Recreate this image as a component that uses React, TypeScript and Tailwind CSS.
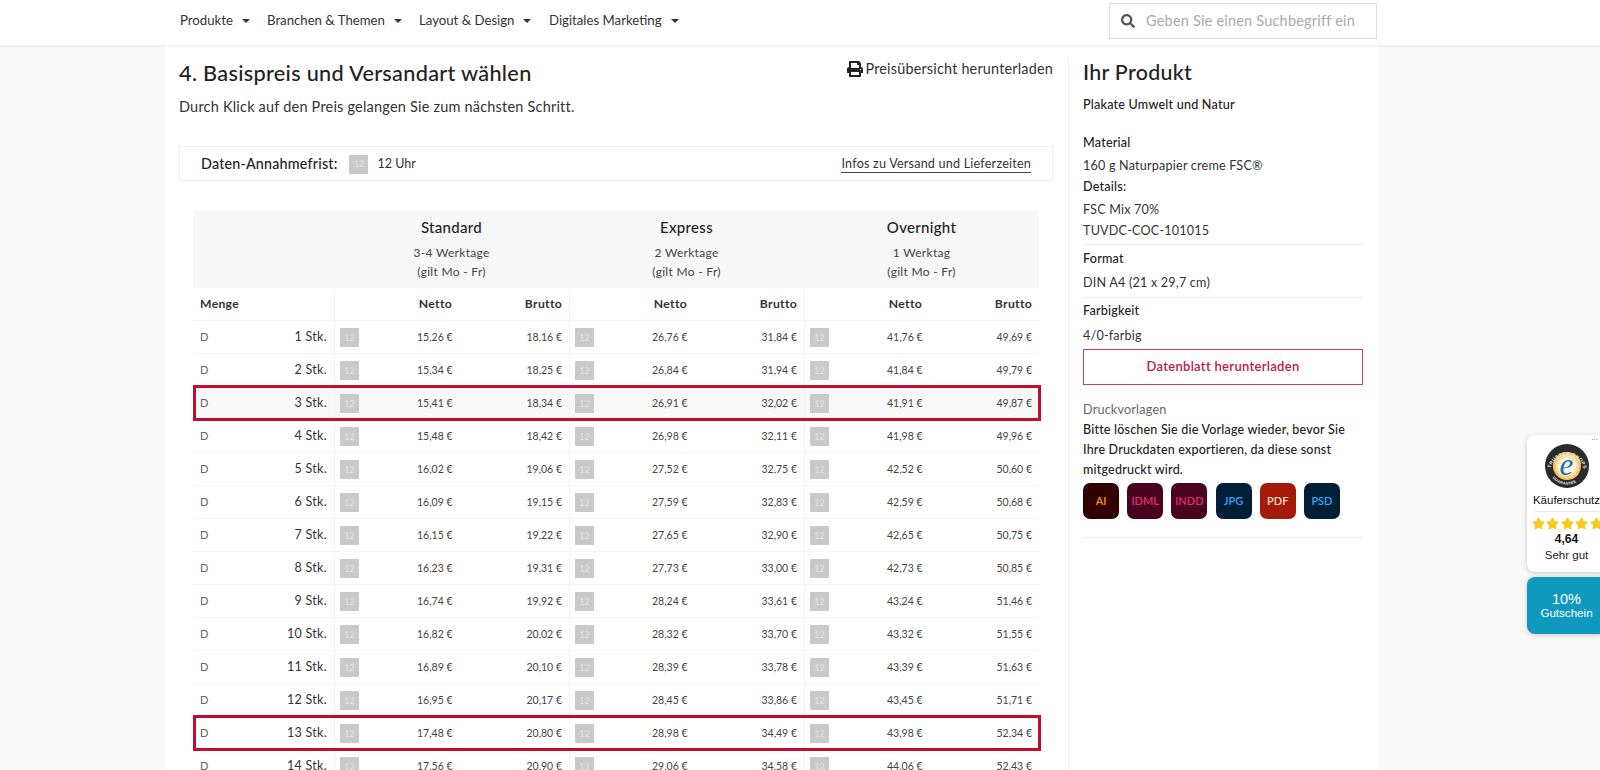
import { FaPrint, FaSearch, FaStar } from "react-icons/fa";

const rows = [
  ["1", "15,26", "18,16", "26,76", "31,84", "41,76", "49,69"],
  ["2", "15,34", "18,25", "26,84", "31,94", "41,84", "49,79"],
  ["3", "15,41", "18,34", "26,91", "32,02", "41,91", "49,87"],
  ["4", "15,48", "18,42", "26,98", "32,11", "41,98", "49,96"],
  ["5", "16,02", "19,06", "27,52", "32,75", "42,52", "50,60"],
  ["6", "16,09", "19,15", "27,59", "32,83", "42,59", "50,68"],
  ["7", "16,15", "19,22", "27,65", "32,90", "42,65", "50,75"],
  ["8", "16,23", "19,31", "27,73", "33,00", "42,73", "50,85"],
  ["9", "16,74", "19,92", "28,24", "33,61", "43,24", "51,46"],
  ["10", "16,82", "20,02", "28,32", "33,70", "43,32", "51,55"],
  ["11", "16,89", "20,10", "28,39", "33,78", "43,39", "51,63"],
  ["12", "16,95", "20,17", "28,45", "33,86", "43,45", "51,71"],
  ["13", "17,48", "20,80", "28,98", "34,49", "43,98", "52,34"],
  ["14", "17,56", "20,90", "29,06", "34,58", "44,06", "52,43"],
];

const shipping = [
  { name: "Standard", days: "3-4 Werktage" },
  { name: "Express", days: "2 Werktage" },
  { name: "Overnight", days: "1 Werktag" },
];

const templates = [
  { label: "AI", box: "bg-[#330000]", text: "text-[#ff9a00]" },
  { label: "IDML", box: "bg-[#49021f]", text: "text-[#e0306f]" },
  { label: "INDD", box: "bg-[#49021f]", text: "text-[#e0306f]" },
  { label: "JPG", box: "bg-[#001e36]", text: "text-[#31a8ff]" },
  { label: "PDF", box: "bg-[#a51b0b]", text: "text-[#ffd9d0]" },
  { label: "PSD", box: "bg-[#001e36]", text: "text-[#31a8ff]" },
];

function Badge() {
  return (
    <span className="flex h-[19px] w-[19px] shrink-0 items-center justify-center bg-[#c9c9c9] text-[9px] text-[#e4e4e4]">
      12
    </span>
  );
}

function NavItem({ label, width }: { label: string; width: string }) {
  return (
    <div className={`flex items-center text-[13.2px] text-[#333] ${width}`}>
      <span>{label}</span>
      <span className="ml-[9px] h-0 w-0 border-x-[4px] border-t-[4px] border-x-transparent border-t-[#333]"></span>
    </div>
  );
}

function PriceGroup({ values }: { values: string[] }) {
  return (
    <div className="flex items-center border-l border-[#f3f3f3] pl-[5px] pr-[7px]">
      <Badge />
      <span className="w-[94px] text-right">{values[0]} €</span>
      <span className="w-[110px] text-right">{values[1]} €</span>
    </div>
  );
}

function PriceRow({ row }: { row: string[] }) {
  const marked = row[0] === "3" || row[0] === "13";
  return (
    <div
      className={`relative grid h-[33px] shrink-0 grid-cols-[141px_235px_235px_235px] border-b border-[#f5f5f5] pt-[1px] text-[10.5px] text-[#444] ${
        row[0] === "3" ? "bg-[#f8f8f9]" : ""
      }`}
    >
      <div className="flex items-center justify-between pl-[7px] pr-[7px]">
        <span className="text-[11px] text-[#666]">D</span>
        <span className="text-[12.5px] tracking-[0.3px] text-[#333]">{row[0]} Stk.</span>
      </div>
      <PriceGroup values={[row[1], row[2]]} />
      <PriceGroup values={[row[3], row[4]]} />
      <PriceGroup values={[row[5], row[6]]} />
      {marked && (
        <div className="absolute left-0 top-[-2px] h-[36px] w-[848px] border-[3px] border-[#c10e2e]"></div>
      )}
    </div>
  );
}

function PriceTable() {
  return (
    <div className="ml-[14px] mt-[29px] flex w-[846px] flex-col">
      <div className="grid h-[78px] shrink-0 grid-cols-[141px_235px_235px_235px] bg-[#f7f7f8] text-center">
        <div></div>
        {shipping.map((s) => (
          <div key={s.name} className="pt-[7px]">
            <div className="text-[15px] font-medium leading-[20px] tracking-[0.3px] text-[#222]">{s.name}</div>
            <div className="mt-[6px] text-[12px] leading-[19px] tracking-[0.3px] text-[#444]">
              <div>{s.days}</div>
              <div>(gilt Mo - Fr)</div>
            </div>
          </div>
        ))}
      </div>
      <div className="grid h-[33px] shrink-0 grid-cols-[141px_235px_235px_235px] border-b border-[#f5f5f5] pt-[1px] text-[12.2px] font-bold tracking-[0.3px] text-[#333]">
        <div className="flex items-center pl-[7px]">Menge</div>
        {shipping.map((s) => (
          <div key={s.name} className="flex items-center border-l border-[#f3f3f3] pr-[7px]">
            <span className="w-[117px] text-right">Netto</span>
            <span className="w-[110px] text-right">Brutto</span>
          </div>
        ))}
      </div>
      {rows.map((row) => (
        <PriceRow key={row[0]} row={row} />
      ))}
    </div>
  );
}

function TrustedLogo() {
  return (
    <svg viewBox="0 0 44 44" className="h-[44px] w-[44px]">
      <defs>
        <path id="sealTop" d="M5.5 25 A16.8 16.8 0 0 1 38.5 25" />
        <path id="sealBottom" d="M3.5 26 A19 19 0 0 0 40.5 26" />
        <radialGradient id="sealGold" cx="0.5" cy="0.5" r="0.5">
          <stop offset="0.55" stopColor="#fff6dc" />
          <stop offset="1" stopColor="#f0bb4a" />
        </radialGradient>
      </defs>
      <circle cx="22" cy="22" r="22" fill="#2a2a2a" />
      <circle cx="22" cy="22" r="14" fill="url(#sealGold)" />
      <text fontSize="4.8" fontWeight="700" fill="#eeeeee" fontFamily="Liberation Sans, sans-serif" letterSpacing="0.35">
        <textPath href="#sealTop" startOffset="2%">TRUSTED SHOPS</textPath>
      </text>
      <text fontSize="3.8" fontWeight="700" fill="#eeeeee" fontFamily="Liberation Sans, sans-serif" letterSpacing="0.3">
        <textPath href="#sealBottom" startOffset="17%">GUARANTEE</textPath>
      </text>
      <text x="21.5" y="31" textAnchor="middle" fontSize="31" fontStyle="italic" fill="#1672b8" fontFamily="Liberation Serif, serif">
        e
      </text>
    </svg>
  );
}

function SideWidgets() {
  return (
    <div className="absolute left-[1527px] top-[435px] flex w-[80px] flex-col gap-[5px] font-['Liberation_Sans',sans-serif]">
      <div className="relative flex h-[137px] flex-col items-center rounded-[8px] bg-white pr-[1px] pt-[9px] shadow-[0_1px_5px_rgba(0,0,0,0.2)]">
        <span className="absolute right-[9px] top-[-1px] text-[8px] leading-[8px] text-[#555]">...</span>
        <TrustedLogo />
        <div className="mt-[5px] text-[11.5px] leading-[14px] text-[#111]">Käuferschutz</div>
        <div className="mt-[4px] w-[64px] border-t border-[#e8e8e8]"></div>
        <div className="ml-[2px] mt-[4px] flex h-[14px] w-[72px] shrink-0 items-center gap-[1.5px] text-[13px] text-[#f9c91e]">
          <FaStar className="shrink-0" />
          <FaStar className="shrink-0" />
          <FaStar className="shrink-0" />
          <FaStar className="shrink-0" />
          <FaStar className="shrink-0" />
        </div>
        <div className="mt-[1px] text-[12px] font-bold leading-[16px] text-[#111]">4,64</div>
        <div className="text-[11.5px] leading-[16px] text-[#222]">Sehr gut</div>
      </div>
      <div className="flex h-[57px] flex-col items-center justify-center rounded-[8px] bg-[#0f99bf] pr-[1px] text-white shadow-[0_1px_5px_rgba(0,0,0,0.2)]">
        <div className="text-[14.5px] leading-[14px]">10%</div>
        <div className="text-[11.6px] leading-[14px]">Gutschein</div>
      </div>
    </div>
  );
}

function Sidebar() {
  const line = "h-[20px] text-[12.6px] leading-[20px] tracking-[0.2px]";
  return (
    <aside className="mt-[14px] h-[711px] w-[310px] shrink-0 border-l border-[#eeeeee] pl-[14px]">
      <h2 className="h-[28px] text-[21.4px] font-medium leading-[26px] tracking-[0.3px] text-[#222]">Ihr Produkt</h2>
      <div className={`mt-[8px] font-medium text-[#222] ${line}`}>Plakate Umwelt und Natur</div>
      <div className="w-[280px]">
        <div className={`mt-[18px] font-medium text-[#222] ${line}`}>Material</div>
        <div className={`mt-[3px] text-[#333] ${line}`}>160 g Naturpapier creme FSC®</div>
        <div className={`mt-[1px] font-medium text-[#222] ${line}`}>Details:</div>
        <div className={`mt-[3px] text-[#333] ${line}`}>FSC Mix 70%</div>
        <div className={`mt-[1px] text-[#333] ${line}`}>TUVDC-COC-101015</div>
        <div className="mt-[3px] border-t border-[#eeeeee]"></div>
        <div className={`mt-[4px] font-medium text-[#222] ${line}`}>Format</div>
        <div className={`mt-[4px] text-[#333] ${line}`}>DIN A4 (21 x 29,7 cm)</div>
        <div className="mt-[4px] border-t border-[#eeeeee]"></div>
        <div className={`mt-[3px] font-medium text-[#222] ${line}`}>Farbigkeit</div>
        <div className={`mt-[5px] text-[#333] ${line}`}>4/0-farbig</div>
        <button className="mt-[3px] flex h-[36px] w-full items-center justify-center border-[1.5px] border-[#c4405c] text-[13px] font-semibold tracking-[0.3px] text-[#c2183f]">
          Datenblatt herunterladen
        </button>
        <div className={`mt-[15px] text-[#666] ${line}`}>Druckvorlagen</div>
        <div className="text-[12.5px] font-medium leading-[20px] tracking-[0.2px] text-[#222]">
          Bitte löschen Sie die Vorlage wieder, bevor Sie Ihre Druckdaten exportieren, da diese sonst mitgedruckt wird.
        </div>
        <div className="mt-[3px] flex gap-[8.2px]">
          {templates.map((t) => (
            <div
              key={t.label}
              className={`flex h-[36px] w-[36px] items-center justify-center rounded-[7px] text-[11px] font-semibold ${t.box} ${t.text}`}
            >
              {t.label}
            </div>
          ))}
        </div>
        <div className="mt-[18px] border-t border-[#eeeeee]"></div>
      </div>
    </aside>
  );
}

export default function App() {
  return (
    <div className="relative h-[770px] w-[1600px] overflow-hidden bg-[#f9f9f9] font-['Lato',sans-serif]">
      <header className="relative z-10 flex h-[45px] items-center bg-white pb-[3px] pl-[180px] pr-[223px] shadow-[0_1px_3px_rgba(0,0,0,0.08)]">
        <NavItem label="Produkte" width="w-[87px]" />
        <NavItem label="Branchen & Themen" width="w-[152px]" />
        <NavItem label="Layout & Design" width="w-[130px]" />
        <NavItem label="Digitales Marketing" width="w-[150px]" />
        <div className="ml-auto flex h-[36px] w-[268px] items-center border border-[#dddddd] pl-[11px]">
          <FaSearch className="text-[14px] text-[#555]" />
          <span className="ml-[11px] text-[14.5px] tracking-[0.2px] text-[#aaaaaa]">Geben Sie einen Suchbegriff ein</span>
        </div>
      </header>
      <main className="ml-[165px] flex h-[725px] w-[1213px] bg-white">
        <div className="w-[903px] shrink-0 pl-[14px]">
          <div className="mt-[14px] flex h-[28px] justify-between">
            <h1 className="text-[21.7px] font-medium leading-[28px] tracking-[0.3px] text-[#222]">
              4. Basispreis und Versandart wählen
            </h1>
            <div className="mr-[15px] flex h-[20px] items-center gap-[2px] text-[14.4px] tracking-[0.2px] text-[#333]">
              <FaPrint className="text-[16px] text-[#222]" />
              <span>Preisübersicht herunterladen</span>
            </div>
          </div>
          <p className="mt-[10px] h-[20px] text-[14.5px] leading-[20px] tracking-[0.2px] text-[#333]">
            Durch Klick auf den Preis gelangen Sie zum nächsten Schritt.
          </p>
          <div className="mt-[29px] flex h-[35px] w-[874px] items-center border border-[#eeeeee] pl-[21px] pr-[21px] pt-[1px]">
            <span className="text-[14.3px] font-medium tracking-[0.2px] text-[#222]">Daten-Annahmefrist:</span>
            <span className="ml-[12px]">
              <Badge />
            </span>
            <span className="ml-[9px] text-[12.5px] text-[#333]">12 Uhr</span>
            <span className="ml-auto border-b border-[#444] text-[12.6px] leading-[16px] tracking-[0.2px] text-[#333]">
              Infos zu Versand und Lieferzeiten
            </span>
          </div>
          <PriceTable />
        </div>
        <Sidebar />
      </main>
      <SideWidgets />
    </div>
  );
}
